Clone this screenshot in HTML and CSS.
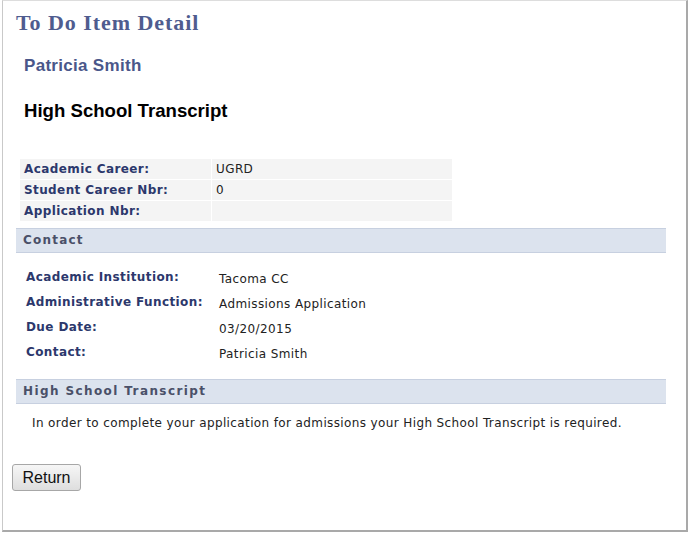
FILE: index.html
```html
<!DOCTYPE html>
<html>
<head>
<meta charset="utf-8">
<link rel="stylesheet" href="styles.css">
</head>
<body>
<div class="window">
  <h1 class="page-title">To Do Item Detail</h1>
  <div class="person">Patricia Smith</div>
  <h2 class="item-title">High School Transcript</h2>

  <div class="keys">
    <div class="k-label">Academic Career:</div><div class="k-value">UGRD</div>
    <div class="k-label">Student Career Nbr:</div><div class="k-value">0</div>
    <div class="k-label">Application Nbr:</div><div class="k-value"></div>
  </div>

  <div class="bar">Contact</div>
  <div class="fields">
    <div class="f-label">Academic Institution:</div><div class="f-value">Tacoma CC</div>
    <div class="f-label">Administrative Function:</div><div class="f-value">Admissions Application</div>
    <div class="f-label">Due Date:</div><div class="f-value">03/20/2015</div>
    <div class="f-label">Contact:</div><div class="f-value">Patricia Smith</div>
  </div>

  <div class="bar bar-hst">High School Transcript</div>
  <p class="message">In order to complete your application for admissions your High School Transcript is required.</p>

  <button class="btn">Return</button>
</div>
</body>
</html>
```
FILE: styles.css
```css
html, body {
  margin: 0;
  padding: 0;
  background: #ffffff;
}
body {
  width: 689px;
  height: 533px;
  overflow: hidden;
}
.window {
  margin-left: 2px;
  width: 683px;
  height: 529px;
  border-left: 1px solid #c9c9c9;
  border-top: 1px solid #dddddd;
  border-right: 2px solid #a9a9a9;
  border-bottom: 2px solid #a9a9a9;
  background: #fff;
  display: flex;
  flex-direction: column;
  align-items: flex-start;
  padding: 0;
  box-sizing: content-box;
}
.page-title {
  margin: 10px 0 0 13px;
  font-family: "Liberation Serif", serif;
  font-weight: bold;
  font-size: 22px;
  line-height: 24px;
  letter-spacing: 0.95px;
  color: #4f5c8f;
}
.person {
  margin: 22px 0 0 21px;
  font-family: "Liberation Sans", Arial, sans-serif;
  font-weight: bold;
  font-size: 17px;
  line-height: 18px;
  letter-spacing: 0.3px;
  color: #4a578a;
}
.item-title {
  margin: 26px 0 0 21px;
  font-family: "Liberation Sans", Arial, sans-serif;
  font-weight: bold;
  font-size: 18.6px;
  line-height: 20px;
  color: #000;
}
.keys {
  margin: 38px 0 0 17px;
  display: grid;
  grid-template-columns: 191px 240px;
  gap: 1px;
  font-family: "DejaVu Sans", Verdana, sans-serif;
  font-size: 12px;
  letter-spacing: 0.4px;
}
.k-label, .k-value {
  background: #f4f4f4;
  height: 20px;
  line-height: 20px;
  padding-left: 4px;
}
.k-label {
  font-weight: bold;
  color: #2c386c;
}
.k-value {
  color: #222;
  padding-left: 4px;
}
.bar {
  align-self: stretch;
  margin: 7px 20px 0 13px;
  height: 23px;
  line-height: 23px;
  background: #dce3ee;
  border-top: 1px solid #c7d0e0;
  border-bottom: 1px solid #c7d0e0;
  padding-left: 7px;
  font-family: "DejaVu Sans", Verdana, sans-serif;
  font-weight: bold;
  font-size: 12px;
  letter-spacing: 1.2px;
  color: #4a5068;
}
.fields {
  margin: 16px 0 0 23px;
  display: grid;
  grid-template-columns: 193px auto;
  grid-auto-rows: 25px;
  font-family: "DejaVu Sans", Verdana, sans-serif;
  font-size: 12px;
  line-height: 16px;
  letter-spacing: 0.4px;
}
.f-label {
  font-weight: bold;
  color: #2c386c;
}
.f-value {
  color: #222;
  padding-top: 2px;
}
.bar-hst {
  margin-top: 10px;
  letter-spacing: 1.4px;
}
.message {
  margin: 11px 0 0 29px;
  font-family: "DejaVu Sans", Verdana, sans-serif;
  font-size: 12px;
  line-height: 16px;
  letter-spacing: 0.38px;
  color: #222;
}
.btn {
  margin: 33px 0 0 9px;
  width: 69px;
  height: 27px;
  font-family: "Liberation Sans", Arial, sans-serif;
  font-size: 16px;
  color: #111;
  background: linear-gradient(#f6f6f6, #dedede);
  border: 1px solid #a7a7a7;
  border-radius: 3px;
  padding: 0;
}
```
